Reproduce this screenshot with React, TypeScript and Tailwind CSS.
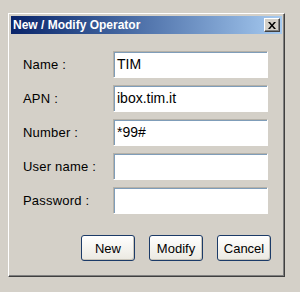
const fields = [
  { label: "Name :", value: "TIM" },
  { label: "APN :", value: "ibox.tim.it" },
  { label: "Number :", value: "*99#" },
  { label: "User name :", value: "" },
  { label: "Password :", value: "" },
];

function XpButton({ children }: { children: string }) {
  return (
    <button className="h-[26px] w-[54px] rounded-[3px] border border-[#1c3b68] bg-gradient-to-b from-white to-[#ebe9e1] text-[13px] leading-none text-black shadow-[inset_-1px_-1px_0_#c9c5ba]">
      {children}
    </button>
  );
}

export default function App() {
  return (
    <div
      className="h-[292px] w-[300px] bg-[#d4d0c8] pl-[8px] pt-[13px]"
      style={{ fontFamily: '"Liberation Sans", Arial, sans-serif' }}
    >
      {/* window frame */}
      <div className="w-[277px] h-[264px] border-t border-l border-white border-r border-b border-r-[#404040] border-b-[#404040] shadow-[inset_-1px_-1px_0_#808080] p-[2px]">
        {/* title bar */}
        <div className="flex h-[18px] items-center justify-between bg-gradient-to-r from-[#0a246a] to-[#a6caf0] pl-[2px] pr-[2px]">
          <span className="text-[12px] font-bold text-white leading-none">New / Modify Operator</span>
          <div className="flex h-[14px] w-[16px] items-center justify-center bg-[#d4d0c8] border-t border-l border-white border-r border-b border-r-[#404040] border-b-[#404040] shadow-[inset_-1px_-1px_0_#808080]">
            <svg width="8" height="7" viewBox="0 0 8 7">
              <path d="M0 0h2l2 2.5L6 0h2L5 3.5 8 7H6L4 4.5 2 7H0l3-3.5z" fill="#000" />
            </svg>
          </div>
        </div>

        {/* form */}
        <div className="pl-[12px] pr-[13px] pt-[17px]">
          <div className="flex flex-col gap-[7px]">
            {fields.map((f) => (
              <div key={f.label} className="flex items-center">
                <label className="w-[90px] text-[13px] text-black tracking-[0.2px]">{f.label}</label>
                <div className="h-[27px] w-[155px] border border-t-[#b5b1a8] border-l-[#b5b1a8] border-r-white border-b-white bg-white shadow-[inset_1px_1px_0_#7f9db9] pl-[3px] pt-[4px] text-[14px] leading-[16px] text-black">
                  {f.value}
                </div>
              </div>
            ))}
          </div>

          <div className="mt-[21px] flex justify-end gap-[14px] pr-0 mr-[-2px]">
            <XpButton>New</XpButton>
            <XpButton>Modify</XpButton>
            <XpButton>Cancel</XpButton>
          </div>
        </div>
      </div>
    </div>
  );
}
